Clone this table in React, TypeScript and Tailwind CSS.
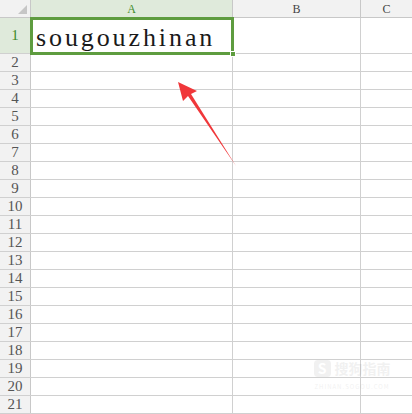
import React from 'react'

const rows = Array.from({ length: 20 }, (_, i) => i + 2)

export default function App() {
  return (
    <div className="relative w-[412px] h-[414px] overflow-hidden bg-white" style={{ fontFamily: '"Liberation Serif", serif' }}>
      {/* column header */}
      <div className="flex h-[18px] bg-[#f2f2f2] border-b border-[#c8c8c8]">
        <div className="relative w-[31px] shrink-0 border-r border-[#c8c8c8]">
          <svg className="absolute right-[3px] bottom-[3px]" width="9" height="9" viewBox="0 0 9 9">
            <polygon points="9,0 9,9 0,9" fill="#c6c6c6" />
          </svg>
        </div>
        <div className="w-[202px] shrink-0 bg-[#dfeadb] border-r border-[#c8c8c8] flex items-center justify-center text-[12px] text-[#3f8a2c]">A</div>
        <div className="w-[128px] shrink-0 border-r border-[#c8c8c8] flex items-center justify-center text-[12px] text-[#444]">B</div>
        <div className="flex-1 flex items-center justify-center text-[12px] text-[#444]">C</div>
      </div>

      {/* row 1 */}
      <div className="flex h-[36px] border-b border-[#d0d0d0]">
        <div className="w-[31px] shrink-0 bg-[#dfeadb] border-r border-[#c8c8c8] flex items-center justify-center text-[15px] text-[#3f8a2c]">1</div>
        <div className="relative w-[202px] shrink-0 border-r border-[#d0d0d0]">
          <div className="absolute -left-[1px] -top-[1px] w-[204px] h-[38px] border-[3px] border-[#5e9c3f]" />
          <div className="absolute right-[-4px] bottom-[-4px] w-[6px] h-[6px] bg-[#5e9c3f] border border-white" />
          <div className="pl-[5px] pt-[5px] text-[26px] leading-[30px] tracking-[2.9px] text-[#1a1a1a]">sougouzhinan</div>
        </div>
        <div className="w-[128px] shrink-0 border-r border-[#d0d0d0]" />
        <div className="flex-1" />
      </div>

      {rows.map((n) => (
        <div key={n} className="flex h-[18px] border-b border-[#d0d0d0]">
          <div className="w-[31px] shrink-0 bg-[#f2f2f2] border-r border-[#c8c8c8] flex items-center justify-center text-[15px] text-[#555]">{n}</div>
          <div className="w-[202px] shrink-0 border-r border-[#d0d0d0]" />
          <div className="w-[128px] shrink-0 border-r border-[#d0d0d0]" />
          <div className="flex-1" />
        </div>
      ))}

      {/* watermark */}
      <div className="absolute left-[313px] top-[358px] w-[78px] flex flex-col items-center opacity-[0.07] text-[#444]" style={{ fontFamily: '"Noto Sans CJK SC", sans-serif' }}>
        <div className="flex items-center h-[20px] gap-[4px]">
          <span className="w-[17px] h-[17px] rounded-[4px] bg-[#444] text-white flex items-center justify-center text-[14px] font-bold leading-none">S</span>
          <span className="text-[14px] font-bold leading-none">搜狗指南</span>
        </div>
        <div className="mt-[5px] text-[6px] leading-[7px] tracking-[1px]">ZHINAN.SOGOU.COM</div>
      </div>

      {/* arrow */}
      <svg className="absolute left-0 top-0" width="412" height="414" viewBox="0 0 412 414">
        <polygon points="236,166 188,96 183,101 178,82 197,91 191,94" fill="#f0373a" />
      </svg>
    </div>
  )
}
